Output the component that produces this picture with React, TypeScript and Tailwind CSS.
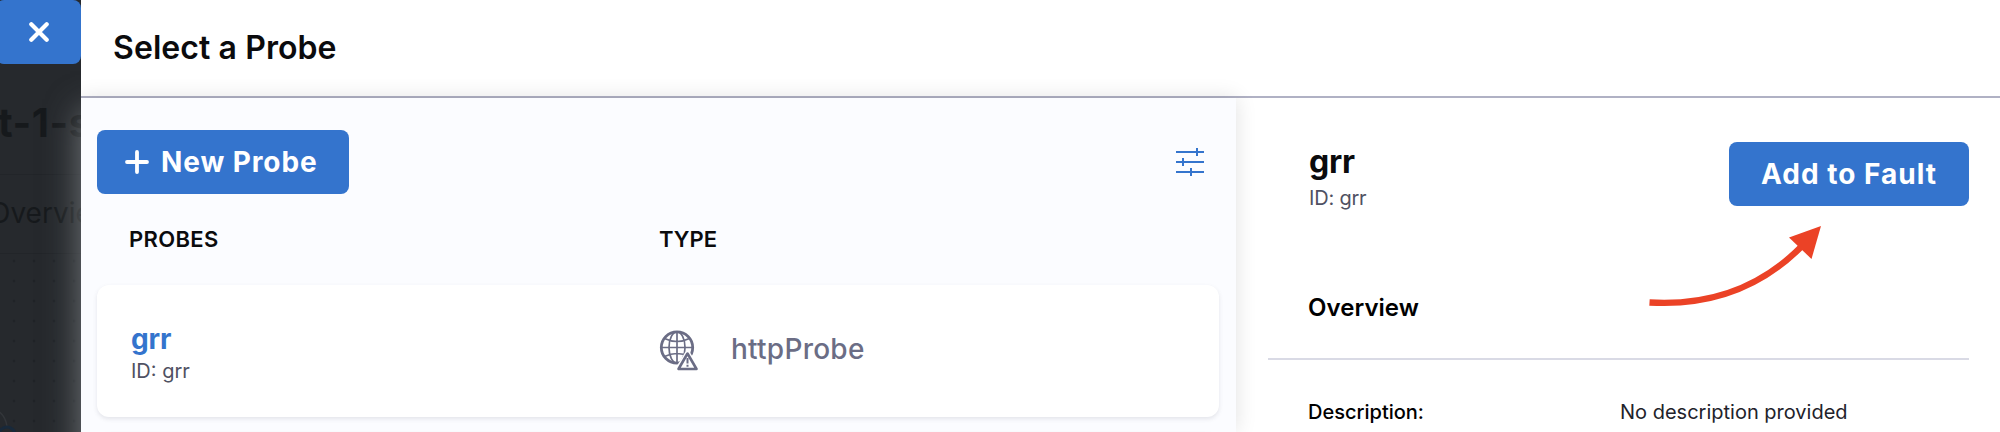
import React from "react";

const dots = Array.from({ length: 36 }, (_, i) => ({
  x: 14 + (i % 4) * 20,
  y: 7 + Math.floor(i / 4) * 20,
}));

function Backdrop() {
  return (
    <aside className="relative flex h-[432px] w-[81px] shrink-0 flex-col overflow-hidden bg-[#26292d]">
      <div className="h-16 shrink-0 overflow-hidden">
        <button className="-ml-1 flex h-16 w-[85px] items-center justify-center rounded-lg bg-[#3474cd]">
          <svg width="20" height="20" viewBox="0 0 20 20" fill="none" stroke="#fff" strokeWidth="4.2" strokeLinecap="round">
            <path d="M2.300 2.300 17.700 17.700M17.700 2.300 2.300 17.700" />
          </svg>
        </button>
      </div>
      <div className="h-[111px] shrink-0 border-b border-[#222529] pt-[35px]">
        <div className="-ml-0.5 text-[40px] leading-[48px] font-bold tracking-[0.5px] whitespace-nowrap text-[#16191c]">t-1-s</div>
      </div>
      <div className="h-[79px] shrink-0 border-b border-[#222529] pt-[20px]">
        <div className="-ml-[11px] text-[28px] leading-9 whitespace-nowrap text-[#16191c]">Overview</div>
      </div>
      <svg width="81" height="178" className="shrink-0">
        {dots.map((d) => (
          <circle key={`${d.x}-${d.y}`} cx={d.x} cy={d.y} r="1.2" fill="#202327" />
        ))}
        <path d="M-4 156Q5 160 7 172" fill="none" stroke="#33363a" strokeWidth="1.5" />
        <circle cx="7" cy="181" r="8" fill="none" stroke="#18293b" strokeWidth="3" />
      </svg>
      <div className="absolute top-[110px] left-[81px] h-[400px] w-[100px] shadow-[0_0_32px_0_rgba(135,140,142,0.8)]" />
    </aside>
  );
}

function GlobeAlert() {
  return (
    <svg width="40" height="42" viewBox="0 0 40 42" fill="none" stroke="#6b6d85">
      <circle cx="18" cy="17.500" r="15.700" strokeWidth="2.800" />
      <ellipse cx="18" cy="17.500" rx="8" ry="15.700" strokeWidth="1.700" />
      <path d="M18 2v31M2 17.500h32M5.500 8.500Q18 14.500 30.500 8.500M5.500 26.500Q18 20.500 30.500 26.500" strokeWidth="1.700" />
      <path d="M28.500 24 19.500 39H37.500Z" fill="#fff" stroke="#fff" strokeWidth="6" strokeLinejoin="round" />
      <path d="M28.500 23.500 19.500 39H37.500Z" fill="#fff" strokeWidth="2.600" strokeLinejoin="round" />
      <path d="M28.500 28v5.500M28.500 34.800v2" strokeWidth="2" />
    </svg>
  );
}

function ProbeList() {
  return (
    <section className="h-[334px] w-[1155px] shrink-0 bg-[#fbfcff] px-4 pt-8 shadow-[0_0_20px_rgba(0,0,0,0.12)]">
      <div className="flex h-16 items-center justify-between pr-4">
        <button className="flex h-16 w-[252px] items-center gap-3 rounded-lg bg-[#3474cd] pl-7 text-[28px] font-bold tracking-[0.9px] text-white">
          <svg width="24" height="24" fill="none" stroke="#fff" strokeWidth="3.800" strokeLinecap="round">
            <path d="M12 2v20M2 12h20" />
          </svg>
          New Probe
        </button>
        <svg width="28" height="28" fill="none" stroke="#3474cd" strokeWidth="2">
          <path d="M0 4h28M0 14h28M0 24h28M21 0v8M7 10v8M15 20v8" />
        </svg>
      </div>
      <div className="flex h-[91px] items-center pl-8 text-[22px] font-semibold text-[#0b0b0d]">
        <div className="w-[530px] tracking-[0.35px]">PROBES</div>
        <div>TYPE</div>
      </div>
      <div className="flex h-[132px] w-[1122px] items-center rounded-xl bg-white pl-[34px] shadow-[0_2px_4px_rgba(96,97,112,0.15)]">
        <div className="w-[528px] pt-1">
          <div className="text-[28px] leading-9 font-bold tracking-[-0.2px] text-[#3474cd]">grr</div>
          <div className="text-[20px] leading-7 text-[#4f5162]">ID: grr</div>
        </div>
        <GlobeAlert />
        <div className="ml-8 pb-1 text-[28px] font-medium tracking-[0.25px] text-[#6b6d85]">httpProbe</div>
      </div>
      <div className="mt-4 h-[132px] w-[1122px] rounded-xl bg-white shadow-[0_2px_4px_rgba(96,97,112,0.15)]" />
    </section>
  );
}

function ProbeDetails() {
  return (
    <section className="relative grow pt-[44px] pr-[31px] pl-8">
      <div className="flex justify-between pl-[41px]">
        <div className="h-[116px]">
          <h2 className="mb-0.5 text-[32px] leading-10 font-bold tracking-[-0.3px] text-[#0b0b0d]">grr</h2>
          <div className="text-[20px] leading-7 tracking-[-0.2px] text-[#4f5162]">ID: grr</div>
        </div>
        <button className="h-16 w-[240px] rounded-lg bg-[#3474cd] text-[28px] font-bold tracking-[1px] text-white">Add to Fault</button>
      </div>
      <div className="flex h-[102px] items-center border-b-2 border-[#d9dae5] pl-10 text-[24px] font-semibold tracking-[0.05px] text-black">Overview</div>
      <div className="flex pt-[38px] pl-10 text-[20px] leading-7">
        <div className="w-[312px] font-medium text-black">Description:</div>
        <div className="text-[#22222a]">No description provided</div>
      </div>
      <svg width="174" height="82" viewBox="0 0 174 82" className="absolute top-[127px] left-[412px]">
        <path d="M1.500 77.500Q93 83 154 21" fill="none" stroke="#eb4226" strokeWidth="6.300" />
        <path d="M173 1 141 12.500 163.500 34Z" fill="#eb4226" />
      </svg>
    </section>
  );
}

export default function App() {
  return (
    <div className="flex h-[432px] w-[2000px] overflow-hidden bg-white font-['Inter',sans-serif]">
      <Backdrop />
      <main className="flex w-[1919px] flex-col overflow-hidden">
        <header className="flex h-[98px] shrink-0 items-center border-b-2 border-[#b0b1c4] pl-8">
          <h1 className="text-[32px] font-semibold tracking-[0.08px] text-[#0b0b0d]">Select a Probe</h1>
        </header>
        <div className="flex">
          <ProbeList />
          <ProbeDetails />
        </div>
      </main>
    </div>
  );
}
